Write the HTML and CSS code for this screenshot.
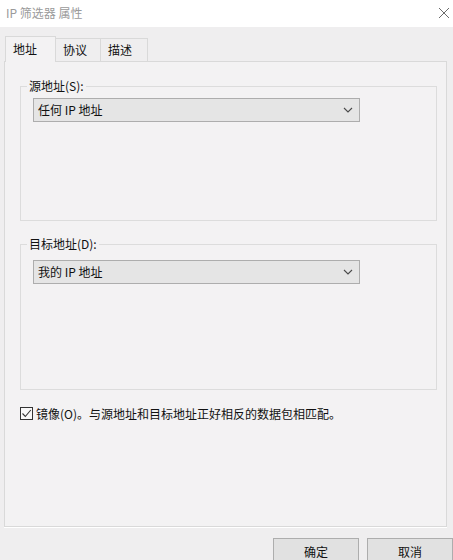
FILE: index.html
```html
<!DOCTYPE html>
<html lang="zh-CN">
<head>
<meta charset="utf-8">
<title>IP 筛选器 属性</title>
<link rel="stylesheet" href="styles.css">
</head>
<body>
<div class="window">
  <div class="titlebar">
    <span class="title">IP 筛选器 属性</span>
    <svg class="close" width="12" height="12" viewBox="0 0 12 12"><path d="M1 1 L11 11 M11 1 L1 11" stroke="#6b6b6b" stroke-width="1" fill="none"/></svg>
  </div>
  <div class="main">
    <div class="tabs">
      <div class="tab active">地址</div>
      <div class="tab tab-proto">协议</div>
      <div class="tab">描述</div>
    </div>
    <div class="panel">
      <fieldset class="group group-src">
        <legend>源地址(S):</legend>
        <div class="combo combo-src"><span>任何 IP 地址</span><svg width="10" height="6" viewBox="0 0 10 6"><path d="M1 1 L5 5 L9 1" stroke="#4a4a4a" stroke-width="1.1" fill="none"/></svg></div>
      </fieldset>
      <fieldset class="group group-dst">
        <legend>目标地址(D):</legend>
        <div class="combo combo-dst"><span>我的 IP 地址</span><svg width="10" height="6" viewBox="0 0 10 6"><path d="M1 1 L5 5 L9 1" stroke="#4a4a4a" stroke-width="1.1" fill="none"/></svg></div>
      </fieldset>
      <label class="check">
        <span class="box"><svg width="11" height="11" viewBox="0 0 11 11"><path d="M1.5 5.5 L4.3 8.5 L9.8 2" stroke="#333" stroke-width="1.1" fill="none"/></svg></span>
        <span>镜像(O)。与源地址和目标地址正好相反的数据包相匹配。</span>
      </label>
    </div>
    <div class="buttons">
      <div class="btn">确定</div>
      <div class="btn">取消</div>
    </div>
  </div>
</div>
</body>
</html>
```
FILE: styles.css
```css
* { box-sizing: border-box; }
html, body { margin: 0; padding: 0; }
body {
  width: 453px;
  height: 560px;
  overflow: hidden;
  background: #efeeef;
  font-family: "Noto Sans CJK SC", "Noto Sans", sans-serif;
  font-size: 12px;
  color: #111111;
}
.window { display: flex; flex-direction: column; height: 560px; }
.titlebar {
  height: 27px;
  background: #ffffff;
  display: flex;
  align-items: center;
  justify-content: space-between;
  padding: 0 3px 2px 6px;
  flex: none;
}
.title { color: #9a9a9a; font-size: 12px; }
.close { display: block; }
.main { flex: 1; padding: 9px 0 0 4px; }
.tabs {
  display: flex;
  align-items: flex-end;
  height: 25px;
  padding-left: 1px;
}
.tab {
  width: 48px;
  height: 23px;
  border: 1px solid #d9d9d9;
  border-bottom: none;
  margin-left: -1px;
  display: flex;
  align-items: center;
  padding: 0 0 1px 7px;
  background: #efeeef;
}
.tab-proto { width: 46px; }
.tab:first-child { margin-left: 0; }
.tab.active {
  width: 51px;
  height: 26px;
  margin-bottom: -1px;
  background: #f3f2f3;
  position: relative;
  z-index: 1;
  padding-bottom: 2px;
}
.panel {
  height: 466px;
  margin-right: 6px;
  border: 1px solid #d9d9d9;
  background: #f3f2f3;
  padding: 16px 9px 0 15px;
  box-shadow: 0 1px 0 #ffffff;
}
.group {
  margin: 0;
  border: 1px solid #dcdcdc;
  padding: 0 0 0 12px;
  min-width: 0;
}
.group legend {
  line-height: 16px;
  padding: 0 2px;
  margin-left: -6px;
}
.group-src { padding-bottom: 98px; }
.group-dst { margin-top: 15px; padding-bottom: 105px; }
.combo {
  width: 327px;
  height: 24px;
  background: #e5e5e5;
  border: 1px solid #adadad;
  display: flex;
  align-items: center;
  justify-content: space-between;
  padding: 0 6px 1px 4px;
}
.combo svg { display: block; margin-top: 1px; }
.combo-src { margin-top: 4px; }
.combo-dst { margin-top: 8px; }
.check {
  display: flex;
  align-items: center;
  gap: 3px;
  margin-top: 17px;
  height: 13px;
}
.box {
  width: 13px;
  height: 13px;
  border: 1px solid #333333;
  background: #f8f8f8;
  display: flex;
  align-items: center;
  justify-content: center;
}
.box svg { display: block; }
.buttons {
  display: flex;
  justify-content: flex-end;
  gap: 8px;
  margin-top: 11px;
}
.btn {
  width: 86px;
  height: 24px;
  background: #e1e1e1;
  border: 1px solid #adadad;
  display: flex;
  align-items: center;
  justify-content: center;
  padding-top: 3px;
}
```
